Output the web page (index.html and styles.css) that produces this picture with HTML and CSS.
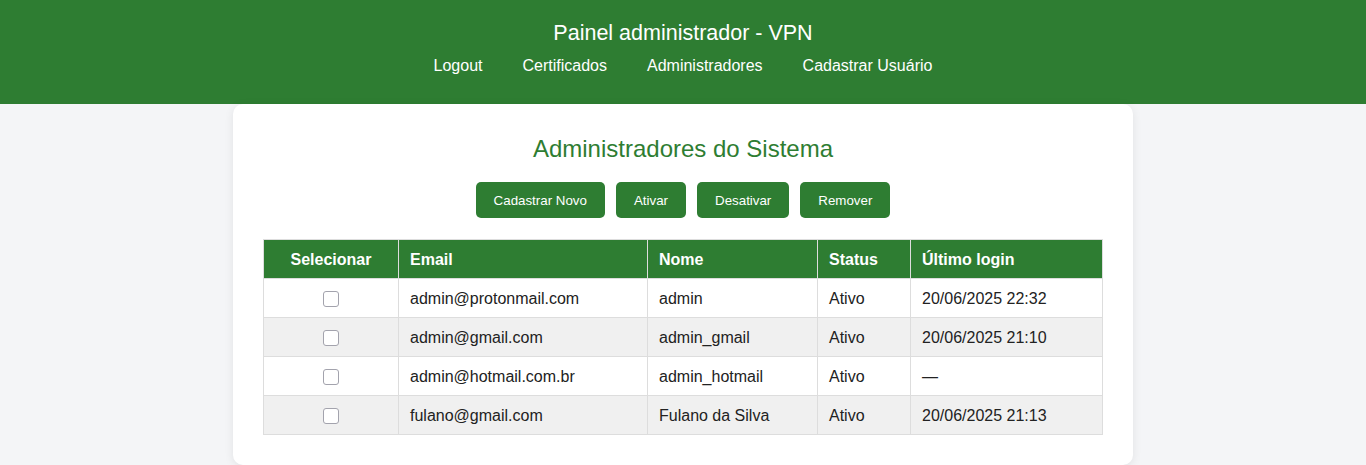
FILE: index.html
```html
<!DOCTYPE html>
<html lang="pt-BR">
<head>
<meta charset="utf-8">
<title>Painel administrador - VPN</title>
<link rel="stylesheet" href="styles.css">
</head>
<body>
<header class="topbar">
  <h1 class="topbar-title">Painel administrador - VPN</h1>
  <nav class="topbar-nav">
    <a href="#">Logout</a>
    <a href="#">Certificados</a>
    <a href="#">Administradores</a>
    <a href="#">Cadastrar Usuário</a>
  </nav>
</header>
<main class="card">
  <h2 class="card-title">Administradores do Sistema</h2>
  <div class="actions">
    <button class="btn">Cadastrar Novo</button>
    <button class="btn">Ativar</button>
    <button class="btn">Desativar</button>
    <button class="btn">Remover</button>
  </div>
  <table class="grid">
    <thead>
      <tr>
        <th class="col-sel">Selecionar</th>
        <th class="col-email">Email</th>
        <th class="col-nome">Nome</th>
        <th class="col-status">Status</th>
        <th class="col-login">Último login</th>
      </tr>
    </thead>
    <tbody>
      <tr>
        <td class="sel"><input type="checkbox"></td>
        <td>admin@protonmail.com</td>
        <td>admin</td>
        <td>Ativo</td>
        <td>20/06/2025 22:32</td>
      </tr>
      <tr>
        <td class="sel"><input type="checkbox"></td>
        <td>admin@gmail.com</td>
        <td>admin_gmail</td>
        <td>Ativo</td>
        <td>20/06/2025 21:10</td>
      </tr>
      <tr>
        <td class="sel"><input type="checkbox"></td>
        <td>admin@hotmail.com.br</td>
        <td>admin_hotmail</td>
        <td>Ativo</td>
        <td>—</td>
      </tr>
      <tr>
        <td class="sel"><input type="checkbox"></td>
        <td>fulano@gmail.com</td>
        <td>Fulano da Silva</td>
        <td>Ativo</td>
        <td>20/06/2025 21:13</td>
      </tr>
    </tbody>
  </table>
</main>
</body>
</html>
```

FILE: styles.css
```css
* { box-sizing: border-box; }

body {
  margin: 0;
  background: #f4f5f7;
  font-family: "Liberation Sans", Arial, sans-serif;
  color: #222;
}

.topbar {
  background: #2e7d32;
  color: #fff;
  height: 104px;
  padding-top: 21px;
  text-align: center;
}

.topbar-title {
  margin: 0;
  font-size: 21.5px;
  font-weight: normal;
  line-height: 25px;
}

.topbar-nav {
  margin-top: 11px;
  display: flex;
  justify-content: center;
  gap: 40px;
  font-size: 16px;
  line-height: 18px;
}

.topbar-nav a {
  color: #fff;
  text-decoration: none;
}

.card {
  width: 900px;
  margin: 0 auto;
  background: #fff;
  border-radius: 10px;
  padding: 30px;
  box-shadow: 0 2px 10px rgba(0, 0, 0, 0.08);
}

.card-title {
  margin: 0;
  text-align: center;
  color: #2e7d32;
  font-size: 24px;
  font-weight: normal;
  line-height: 30px;
}

.actions {
  display: flex;
  justify-content: center;
  gap: 11px;
  margin-top: 18px;
  margin-bottom: 21px;
}

.btn {
  height: 36px;
  padding: 0 18px;
  background: #2e7d32;
  color: #fff;
  border: none;
  border-radius: 5px;
  font-family: "Liberation Sans", Arial, sans-serif;
  font-size: 13.333px;
  cursor: pointer;
}

.grid {
  width: 840px;
  border-collapse: collapse;
  font-size: 16px;
}

.grid th,
.grid td {
  border: 1px solid #ddd;
  padding: 1px 10px 0 11px;
  text-align: left;
  height: 39px;
}

.grid th {
  background: #2e7d32;
  color: #fff;
  font-weight: bold;
}

.grid th.col-sel { text-align: center; width: 135px; padding: 1px 10px 0; }
.grid .col-email { width: 249px; }
.grid .col-nome { width: 170px; }
.grid .col-status { width: 93px; }

.grid td.sel { text-align: center; padding: 1px 10px 0; }

.grid td.sel input {
  appearance: none;
  -webkit-appearance: none;
  margin: 0;
  width: 16px;
  height: 16px;
  border: 1px solid #a3a3ad;
  border-radius: 3px;
  background: #fff;
  vertical-align: middle;
}

.grid tbody tr:nth-child(even) td { background: #f0f0f0; }
```
